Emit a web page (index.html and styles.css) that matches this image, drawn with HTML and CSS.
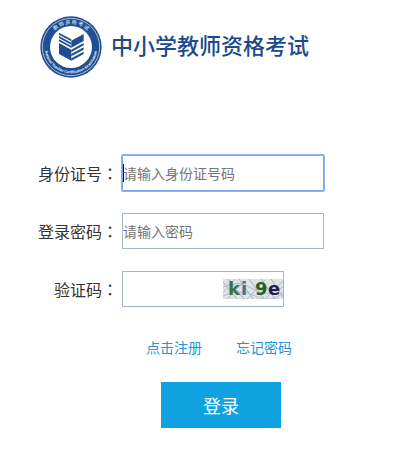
FILE: index.html
```html
<!DOCTYPE html>
<html lang="zh-CN">
<head>
    <meta charset="UTF-8">
    <meta name="viewport" content="width=device-width, initial-scale=1.0">
    <title>中小学教师资格考试</title>
    <link rel="stylesheet" href="styles.css">
</head>
<body>
    <header class="header">
        <svg class="logo" viewBox="0 0 186 186" aria-hidden="true">
            <circle cx="93" cy="93" r="92" fill="#1f4e93"/>
            <circle cx="93" cy="93" r="86" fill="none" stroke="#a9c0de" stroke-width="3"/>
            <circle cx="93" cy="93" r="63" fill="#fff"/>
            <path id="ringTop" d="M24 93a69 69 0 0 1 138 0" fill="none"/>
            <path id="ringBottom" d="M14 93a79 79 0 0 0 158 0" fill="none"/>
            <text class="ring-cn"><textPath href="#ringTop" startOffset="50%">教 师 资 格 考 试</textPath></text>
            <text class="ring-en"><textPath href="#ringBottom" startOffset="50%">National Teacher Certification Examination</textPath></text>
            <g fill="#1f4e93">
                <path d="M94 74l37-20v21l-37 20z"/>
                <path d="M57 81l37 20v33l-37-20z"/>
                <path d="M57 50l37 20v6l-37-20zM57 60l37 20v6l-37-20zM57 70l37 20v6l-37-20z"/>
                <path d="M94 101l37-20v7l-37 20zM94 114l37-20v7l-37 20zM94 127l37-20v7l-37 20z"/>
            </g>
        </svg>
        <h1 class="title">中小学教师资格考试</h1>
    </header>
    <form class="login">
        <div class="row">
            <label for="card">身份证号<span lang="zh-TW">：</span></label>
            <input class="field" id="card" type="text" placeholder="请输入身份证号码" autofocus>
        </div>
        <div class="row">
            <label for="password">登录密码<span lang="zh-TW">：</span></label>
            <input class="field" id="password" type="password" placeholder="请输入密码">
        </div>
        <div class="row">
            <label for="code">验证码<span lang="zh-TW">：</span></label>
            <div class="code-box">
                <input id="code" type="text">
                <svg class="captcha" viewBox="0 0 60 20">
                    <rect width="60" height="20" fill="#dce4e6"/>
                    <g fill="none" stroke="#9fb4bd">
                        <path d="M0 3l14 17M5 0l16 20M16 0l14 20M26 0l15 20M38 0l14 20M48 0l12 18"/>
                        <path d="M0 14l12-14M4 20L22 2M24 20L42 1M42 20L60 2" stroke="#a9c5b0"/>
                        <path d="M0 8q15-8 30 2t30-2M0 17q16-8 32 0t28-3" stroke="#b9b6cf"/>
                    </g>
                    <text x="5" y="16" fill="#3b7443">k</text>
                    <text x="18" y="16" fill="#54678c">i</text>
                    <text x="32" y="16" fill="#28601f">9</text>
                    <text x="45" y="16" fill="#30164b">e</text>
                </svg>
            </div>
        </div>
        <div class="links">
            <a href="#">点击注册</a>
            <a href="#">忘记密码</a>
        </div>
        <button class="submit" type="submit">登录</button>
    </form>
</body>
</html>
```
FILE: styles.css
```css
*{
    margin: 0;
    padding: 0;
    box-sizing: border-box;
}
body{
    background-color: #fff;
    color: #333;
    font-family: "Noto Sans CJK SC", sans-serif;
    font-size: 16px;
}
.header{
    display: flex;
    align-items: center;
    gap: 9px;
    padding: 16px 40px 0;
}
.logo{
    width: 62px;
    height: 62px;
    flex: none;
}
.ring-cn, .ring-en{
    fill: #fff;
    text-anchor: middle;
}
.ring-cn{font-size: 15px;}
.ring-en{
    font-family: "Liberation Sans", sans-serif;
    font-size: 11px;
    font-weight: bold;
}
.title{
    padding-bottom: 6px;
    color: #1b4b8a;
    font-size: 22px;
    font-weight: 500;
    line-height: 32px;
}
.login{
    display: flex;
    flex-direction: column;
    gap: 22px;
    padding: 77px 38px 0;
}
.row{
    display: flex;
    align-items: center;
    gap: 4px;
}
.row label{
    display: flex;
    justify-content: flex-end;
    width: 80px;
    white-space: nowrap;
}
.row label span{font-family: "Noto Sans CJK TC", sans-serif;}
.field, .code-box{
    height: 36px;
    border: 1px solid #a3b7c7;
}
.field{width: 202px;}
input{
    font-family: inherit;
    font-size: 14px;
    color: #333;
    background-color: #fff;
    outline: none;
}
input::placeholder{color: #757575;}
.field:focus{
    border-color: #7aa5ea;
    border-radius: 1px;
    box-shadow: 0 0 0 1px #8fb4ee;
    caret-color: transparent;
    background: linear-gradient(#000, #000) 0 50% / 1px 18px no-repeat;
}
.code-box{
    display: flex;
    align-items: center;
    width: 162px;
}
.code-box input{
    flex: 1;
    min-width: 0;
    height: 34px;
    border: none;
}
.captcha{
    width: 60px;
    height: 20px;
    font-family: "DejaVu Sans", sans-serif;
    font-size: 18px;
    font-weight: bold;
}
.links{
    display: flex;
    gap: 34px;
    margin-top: 8px;
    padding-left: 108px;
}
.links a{
    color: #2295d4;
    font-size: 14px;
    line-height: 20px;
    text-decoration: none;
}
.submit{
    width: 120px;
    height: 46px;
    margin: 3px 0 0 123px;
    border: none;
    background-color: #0fa1e0;
    color: #fff;
    font-family: inherit;
    font-size: 18px;
    cursor: pointer;
}
```
